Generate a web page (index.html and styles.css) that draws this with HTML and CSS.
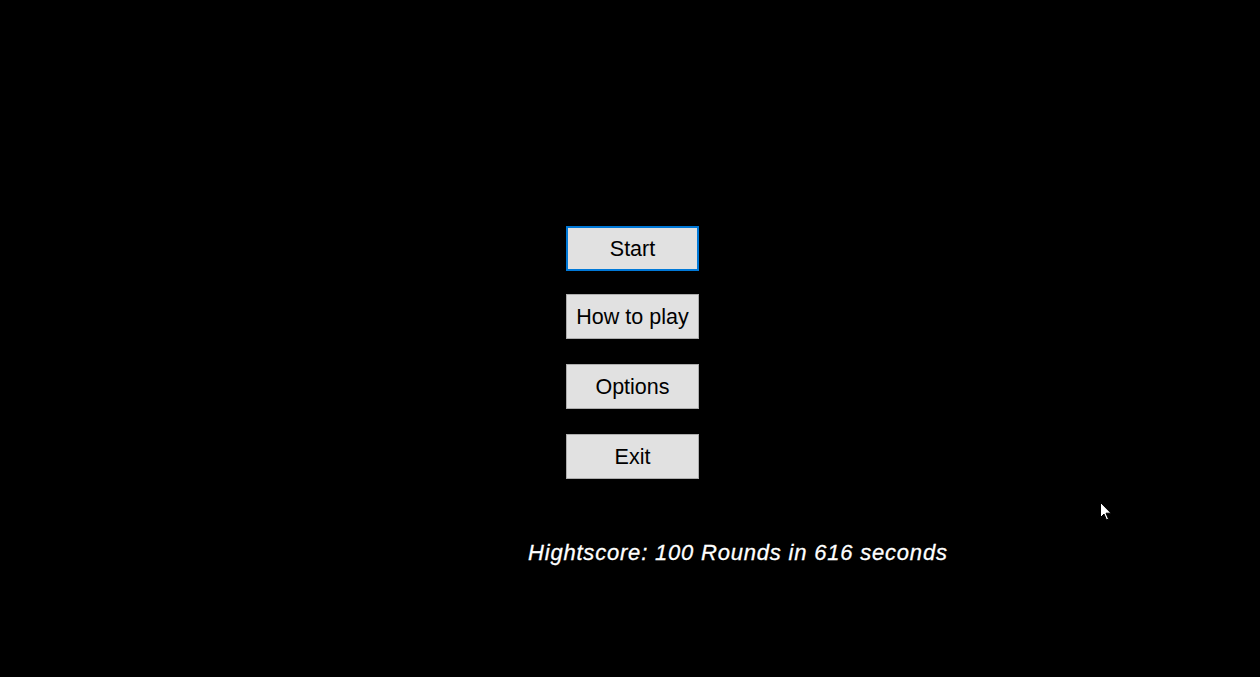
FILE: index.html
```html
<!DOCTYPE html>
<html>
<head>
<meta charset="utf-8">
<link rel="stylesheet" href="styles.css">
</head>
<body>
<div class="screen">
  <div class="menu">
    <button class="btn btn-focus">Start</button>
    <button class="btn">How to play</button>
    <button class="btn">Options</button>
    <button class="btn">Exit</button>
  </div>
  <div class="score">Hightscore: 100 Rounds in 616 seconds</div>
  <svg class="cursor" width="12" height="19" viewBox="0 0 12 19">
    <path d="M0.5 0.5 L0.5 15.5 L4 12 L6.5 18 L8.5 17 L6 11.2 L11 11.2 Z" fill="#fff" stroke="#000" stroke-width="1"/>
  </svg>
</div>
</body>
</html>
```
FILE: styles.css
```css
html, body {
  margin: 0;
  padding: 0;
  background: #000;
}
.screen {
  position: relative;
  width: 1260px;
  height: 677px;
  background: #000;
  overflow: hidden;
}
.menu {
  display: flex;
  flex-direction: column;
  align-items: flex-start;
  gap: 25px;
  padding-top: 226px;
  padding-left: 566px;
}
.btn {
  box-sizing: border-box;
  width: 133px;
  height: 45px;
  margin: 0;
  padding: 2px 0 0;
  background: #e1e1e1;
  border: 1px solid #adadad;
  border-radius: 0;
  color: #000;
  font-family: "Liberation Sans", Arial, sans-serif;
  font-size: 21.5px;
  line-height: 1;
  text-align: center;
}
.btn-focus {
  border: 2px solid #0078d7;
  margin-bottom: -2px;
}
.score {
  margin-top: 62px;
  padding-left: 528px;
  color: #fff;
  font-family: "Liberation Sans", Arial, sans-serif;
  font-style: italic;
  font-size: 22px;
  letter-spacing: 0.8px;
  -webkit-text-stroke: 0.3px #fff;
  line-height: 24px;
}
.cursor {
  position: absolute;
  left: 1100px;
  top: 502px;
}
```
